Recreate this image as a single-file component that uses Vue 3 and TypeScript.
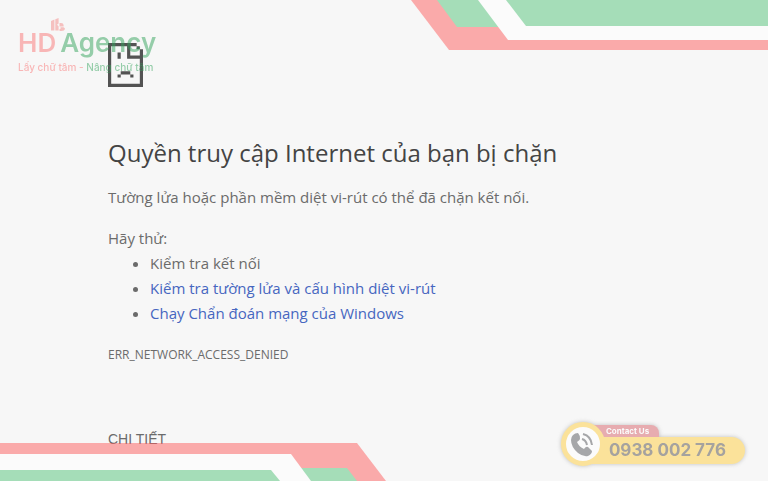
<script setup lang="ts">
interface Suggestion {
  text: string
  href?: string
}

const suggestions: Suggestion[] = [
  { text: 'Kiểm tra kết nối' },
  { text: 'Kiểm tra tường lửa và cấu hình diệt vi-rút', href: '#firewall' },
  { text: 'Chạy Chẩn đoán mạng của Windows', href: '#diagnostics' },
]
</script>

<template>
  <div class="page">
    <main class="error">
      <svg class="sad-page" viewBox="0 0 11 14" preserveAspectRatio="none" aria-hidden="true">
        <path d="M0 0H9V1H1V13H10V5H6V1H7V4H10V2H11V14H0ZM9 1h1v1h-1ZM3 3h1v2h-1ZM4 9h3v1h-3ZM3 10h1v1h-1ZM7 10h1v1h-1Z" />
      </svg>
      <h1>Quyền truy cập Internet của bạn bị chặn</h1>
      <p class="summary">Tường lửa hoặc phần mềm diệt vi-rút có thể đã chặn kết nối.</p>
      <p class="try">Hãy thử:</p>
      <ul>
        <li v-for="item in suggestions" :key="item.text">
          <a v-if="item.href" :href="item.href">{{ item.text }}</a>
          <template v-else>{{ item.text }}</template>
        </li>
      </ul>
      <p class="code">ERR_NETWORK_ACCESS_DENIED</p>
      <button type="button" class="details">CHI TIẾT</button>
    </main>

    <svg class="band band-top" width="357" height="50" viewBox="0 0 357 50" aria-hidden="true">
      <path class="pink" d="M0 0L38 50H357V0Z" />
      <path class="green" d="M26 0L46 27H89L69 0Z" />
      <path class="white" d="M67 0L97 40H357V0Z" />
      <path class="green" d="M95 0L115 26H357V0Z" />
    </svg>
    <svg class="band band-bottom" width="386" height="38" viewBox="0 0 386 38" aria-hidden="true">
      <path class="pink" d="M0 0H357L386 38H0Z" />
      <path class="green" d="M290 25H347L357 38H290Z" />
      <path class="white" d="M0 11H291L311 38H0Z" />
      <path class="green" d="M0 27H271L280 38H0Z" />
    </svg>

    <div class="brand">
      <svg class="brand-mark" width="14" height="14" viewBox="0 0 14 14" aria-hidden="true">
        <path d="M0 3L3.4 1.6V12.5H0ZM4.3 1.2L7.6 0V5.4L6 6.8L7.6 8.2V12.5H4.3ZM8.5 5H10Q12.6 5 12.6 7V8.4H8.5ZM9.5 9.2H12.5Q14 9.8 14 11Q13.6 13 10.5 13H8.5V11H9.5Z" />
      </svg>
      <div class="brand-name"><span class="red">HD</span><span class="leaf">Agency</span></div>
      <div class="brand-line"><span class="red">Lấy chữ tâm -</span> <span class="leaf">Nâng chữ tâm</span></div>
    </div>

    <a class="contact" href="tel:0938002776">
      <span class="contact-label">Contact Us</span>
      <span class="contact-number">0938 002 776</span>
      <span class="contact-badge">
        <svg width="26" height="26" viewBox="0 0 26 26" aria-hidden="true">
          <path class="handset" d="M3 4Q5 2 8 2Q10 4 10 8Q10 9 7 11Q9 16 14 18Q16 15 18 16L22 20Q22 23 18 25Q13 26 8 22Q1 16 1 9Q1 6 3 4Z" />
          <path class="wave" d="M12 8Q16 9 17 14M13 3Q21 5 22 14" />
        </svg>
      </span>
    </a>
  </div>
</template>

<style>
body {
  margin: 0;
  background: #f7f7f7;
}
</style>

<style scoped>
.page {
  position: relative;
  min-height: 100vh;
  overflow: hidden;
  color: #6b6b6b;
  font-family: "Open Sans", "Noto Sans", sans-serif;
  font-size: 15px;
  line-height: 25px;
}
.error {
  display: flex;
  flex-direction: column;
  align-items: flex-start;
  padding: 43px 108px 0;
}
.sad-page {
  width: 35px;
  height: 44px;
  fill: #535353;
}
h1 {
  margin: 48px 0 0;
  color: #444444;
  font-size: 24px;
  font-weight: 400;
  line-height: 36px;
}
p {
  margin: 0;
}
.summary {
  margin-top: 14px;
}
.try {
  margin-top: 16px;
}
ul {
  margin: 0;
  padding-left: 42px;
}
a {
  color: #4666c0;
  text-decoration: none;
}
.code {
  margin-top: 16px;
  font-size: 12px;
}
.details {
  margin-top: 60px;
  padding: 0;
  border: 0;
  background: none;
  color: #6b6b6b;
  font-family: "Liberation Sans", sans-serif;
  font-size: 14px;
  line-height: 24px;
}
.band {
  position: absolute;
  opacity: 0.5;
}
.band-top {
  top: 0;
  right: 0;
}
.band-bottom {
  bottom: 0;
  left: 0;
}
.pink {
  fill: #fd5f5f;
}
.green {
  fill: #55c57b;
}
.white {
  fill: #ffffff;
}
.brand {
  position: absolute;
  top: 28px;
  left: 18px;
  opacity: 0.5;
  font-family: Inter, sans-serif;
  white-space: nowrap;
}
.brand-mark {
  position: absolute;
  top: -10px;
  left: 33px;
  fill: #f58a88;
}
.brand-name {
  display: flex;
  gap: 4px;
  font-size: 26px;
  font-weight: 600;
  line-height: 30px;
}
.brand-line {
  font-size: 10px;
  font-weight: 500;
  line-height: 18px;
}
.red {
  color: #fa7777;
}
.leaf {
  color: #35a45d;
}
.contact {
  position: absolute;
  right: 23px;
  bottom: 17px;
  display: flex;
  flex-direction: column;
  align-items: flex-start;
  padding-left: 22px;
  opacity: 0.5;
  font-family: Inter, sans-serif;
  font-weight: 700;
  filter: drop-shadow(0 0 2px #888888);
}
.contact-label {
  padding: 0 10px 0 23px;
  border-radius: 0 8px 0 0;
  background: #d9636c;
  color: #ffffff;
  font-size: 8px;
  line-height: 12px;
}
.contact-number {
  padding: 0 19px 0 26px;
  border-radius: 0 14px 14px 0;
  background: #ffcf3f;
  color: #554f49;
  font-size: 17px;
  line-height: 27px;
}
.contact-badge {
  position: absolute;
  top: -3px;
  left: 0;
  display: grid;
  place-items: center;
  width: 34px;
  height: 34px;
  border: 5px solid #ffcf3f;
  border-radius: 50%;
  background: #ffffff;
}
.handset {
  fill: #57595d;
}
.wave {
  fill: none;
  stroke: #57595d;
  stroke-width: 2;
}
</style>
